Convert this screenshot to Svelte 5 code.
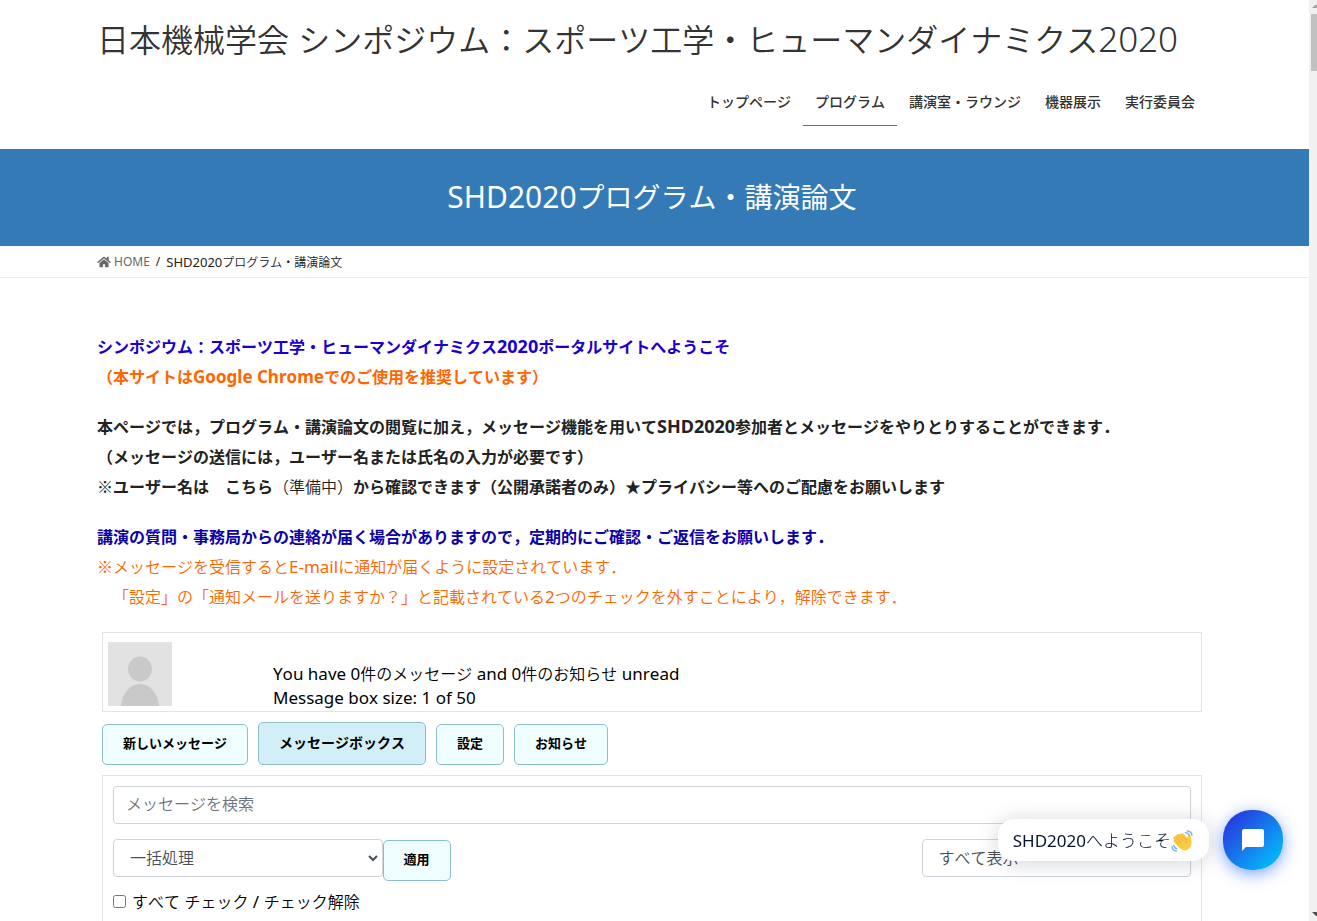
<script>
  const nav = [
    { label: 'トップページ' },
    { label: 'プログラム', current: true },
    { label: '講演室・ラウンジ' },
    { label: '機器展示' },
    { label: '実行委員会' }
  ];
  const tabs = [
    { label: '新しいメッセージ' },
    { label: 'メッセージボックス', current: true },
    { label: '設定' },
    { label: 'お知らせ' }
  ];
</script>

<div class="page">
  <header class="container site-header">
    <a class="site-title" href="#top">日本機械学会<span class="latin-xl">{' '}</span>シンポジウム：スポーツ工学・ヒューマンダイナミクス<span class="latin-xl">2020</span></a>
    <nav>
      {#each nav as item}
        <a href="#nav" class:current={item.current}>{item.label}</a>
      {/each}
    </nav>
  </header>

  <div class="banner">
    <h1><span class="latin-lg">SHD2020</span>プログラム・講演論文</h1>
  </div>

  <div class="crumbs">
    <div class="container crumb-row">
      <a href="#home">
        <svg viewBox="0 0 576 512" width="14" height="12" aria-hidden="true">
          <path fill="currentColor" d="M280 148 96 300v164a16 16 0 0 0 16 16h112a16 16 0 0 0 16-16v-96a16 16 0 0 1 16-16h64a16 16 0 0 1 16 16v96a16 16 0 0 0 16 16h112a16 16 0 0 0 16-16V300L296 148a12 12 0 0 0-16 0zM572 251l-84-69V44a12 12 0 0 0-12-12h-56a12 12 0 0 0-12 12v73l-90-74a48 48 0 0 0-61 0L4 251a12 12 0 0 0-2 17l26 31a12 12 0 0 0 17 2L280 107a12 12 0 0 1 16 0l235 194a12 12 0 0 0 17-2l26-31a12 12 0 0 0-2-17z" />
        </svg>
        <span>HOME</span>
      </a>
      <span>/</span>
      <span class="here"><span class="latin-sm">SHD2020</span>プログラム・講演論文</span>
    </div>
  </div>

  <main class="container">
    <p>
      <strong class="blue">シンポジウム：スポーツ工学・ヒューマンダイナミクス<span class="latin-num">2020</span>ポータルサイトへようこそ</strong><br />
      <strong class="orange">（本サイトは<span class="latin">Google Chrome</span>でのご使用を推奨しています）</strong>
    </p>
    <p>
      <strong>本ページでは，プログラム・講演論文の閲覧に加え，メッセージ機能を用いて<span class="latin-num">SHD2020</span>参加者とメッセージをやりとりすることができます．</strong><br />
      <strong>（メッセージの送信には，ユーザー名または氏名の入力が必要です）</strong><br />
      <strong>※ユーザー名は　こちら</strong>（準備中）<strong>から確認できます（公開承諾者のみ）★プライバシー等へのご配慮をお願いします</strong>
    </p>
    <p>
      <strong class="navy">講演の質問・事務局からの連絡が届く場合がありますので，定期的にご確認・ご返信をお願いします．</strong><br />
      <span class="orange">※メッセージを受信すると<span class="latin">E-mail</span>に通知が届くように設定されています．</span><br />
      <span class="orange">{'\u3000'}「設定」の「通知メールを送りますか？」と記載されている<span class="latin">2</span>つのチェックを外すことにより，解除できます．</span>
    </p>

    <section class="messages">
      <div class="summary">
        <svg class="avatar" viewBox="0 0 64 64" width="64" height="64" aria-hidden="true">
          <rect width="64" height="64" fill="#e2e2e2" />
          <ellipse cx="32" cy="27" rx="12" ry="12.5" fill="#c9c9c9" />
          <path d="M13 64c1-13 9-22 19-22s18 9 19 22z" fill="#c9c9c9" />
        </svg>
        <div class="status">
          <span class="latin">You have 0</span>件のメッセージ<span class="latin">{' and 0'}</span>件のお知らせ<span class="latin">{' unread'}</span><br />
          <span class="latin">Message box size: 1 of 50</span>
        </div>
      </div>

      <div class="tabs">
        {#each tabs as tab}
          <button type="button" class="btn" class:current={tab.current}>{tab.label}</button>
        {/each}
      </div>

      <form class="panel">
        <input class="field" type="search" placeholder="メッセージを検索" aria-label="メッセージを検索" />
        <div class="actions">
          <select class="field arrow" aria-label="一括処理"><option>一括処理</option></select>
          <button type="button" class="btn">適用</button>
          <select class="field filter" aria-label="すべて表示"><option>すべて表示</option></select>
        </div>
        <label class="check">
          <input type="checkbox" />
          <span>すべて<span class="latin">{' '}</span>チェック<span class="latin">{' / '}</span>チェック解除</span>
        </label>
      </form>
    </section>
  </main>

  <aside class="chat">
    <div class="bubble">
      <span><span class="chat-latin">SHD2020</span>へようこそ</span>
      <svg viewBox="0 0 22 22" width="22" height="22" aria-hidden="true">
        <path d="M2.200 7.500c.5-1 1.500-1.200 2.400-.7-.4-1.500 1-2.600 2.400-1.700.2-1.400 1.900-1.900 3-.8.6-1.200 2.100-1.200 3-.2l3.300 4.200c.5-1.300.1-3.200 1.500-3.700 1.500-.4 2.200 1 2.300 3.200.3 2.800.9 5.200-.1 8-1 2.700-3.500 4.700-6.500 4.600-2.600-.1-4.300-1.500-6-3.300L3 12.200c-1-1.200-.6-2.200.4-2.400-1-.6-1.500-1.400-1.200-2.300z" fill="#fbcb43" />
        <path d="m4.600 6.800 5.600 6M7 5.100l5.400 6M10 4.300l4.600 5.200M3.400 9.800 8 14.600M16.300 8.300c-1.700 1.300-1.900 3-1.100 4.800" fill="none" stroke="#e5a12d" stroke-width=".7" stroke-linecap="round" />
        <path d="M14.500 2.600c1.800.1 3.100 1.100 3.700 2.700M16.300 1c2.700.1 4.400 1.800 4.700 4.400M1 16.500c.2 2.600 1.800 4.300 4.500 4.500M2.900 15.300c.2 1.700 1.200 2.900 2.900 3.400" fill="none" stroke="#73b7ed" stroke-width="1.400" stroke-linecap="round" />
      </svg>
    </div>
    <button type="button" class="launcher" aria-label="チャットを開く">
      <svg viewBox="0 0 22 22" width="22" height="22" aria-hidden="true">
        <path d="M2 0h18a2 2 0 0 1 2 2v14a2 2 0 0 1-2 2H4l-4 4V2a2 2 0 0 1 2-2z" fill="#fff" />
      </svg>
    </button>
  </aside>

  <div class="scrollbar" aria-hidden="true">
    <svg viewBox="0 0 8 14" width="8" height="14"><path d="M3 8h5V5H6z" fill="#a3a3a3" /></svg>
    <div class="thumb"></div>
    <svg class="down" viewBox="0 0 8 14" width="8" height="14"><path d="M3 5h5v4H7z" fill="#505050" /></svg>
  </div>
</div>

<style>
  :global(body) {
    margin: 0;
    background: #fff;
  }
  .page {
    --ui: 'Noto Sans CJK JP', sans-serif;
    --latin: 'Noto Sans', 'Noto Sans CJK JP', sans-serif;
    box-sizing: border-box;
    display: flex;
    flex-direction: column;
    height: 100vh;
    overflow: hidden;
    padding-right: 13px;
    font: 350 16px/30px var(--ui);
    text-spacing-trim: space-all;
    color: #222;
  }
  .page * {
    box-sizing: border-box;
    font-kerning: none;
  }
  a {
    color: inherit;
    text-decoration: none;
  }
  .container {
    width: 100%;
    max-width: 1110px;
    margin: 0 auto;
  }
  [class^='latin'] {
    font-family: var(--latin);
    font-weight: 400;
    line-height: 1;
    white-space: pre-wrap;
  }
  strong [class^='latin'] {
    font-weight: 700;
  }
  .latin { font-size: 17px; }
  .latin-num { font-size: 18px; }
  .site-title .latin-xl {
    font-size: 35px;
    font-weight: 300;
  }
  .latin-lg { font-size: 30px; }
  .latin-sm { font-size: 13px; }

  .site-header {
    height: 149px;
    flex: none;
    display: flex;
    flex-direction: column;
    color: #333;
  }
  .site-title {
    font-size: 32px;
    line-height: 40px;
    padding-top: 18px;
    white-space: nowrap;
  }
  nav {
    display: flex;
    justify-content: flex-end;
    margin-top: 20px;
  }
  nav a {
    font-size: 14px;
    font-weight: 500;
    line-height: 46px;
    height: 48px;
    padding: 0 12px;
    border-bottom: 1px solid transparent;
  }
  nav a.current {
    border-bottom-color: #337ab7;
  }

  .banner {
    flex: none;
    display: flex;
    align-items: center;
    justify-content: center;
    height: 97px;
    margin-right: -13px;
    padding: 0 13px 4px 0;
    background: #337ab7;
    color: #fff;
  }
  h1 {
    margin: 0;
    font-size: 28px;
    font-weight: 400;
    line-height: 40px;
  }

  .crumbs {
    flex: none;
    margin-right: -13px;
    padding-right: 13px;
    border-bottom: 1px solid #e9e9e9;
  }
  .crumb-row {
    display: flex;
    gap: 6px;
    font: 12px/31px var(--latin);
  }
  .crumb-row a {
    display: flex;
    align-items: center;
    gap: 3px;
    color: #666;
  }
  .here {
    font-family: var(--ui);
    font-weight: 350;
  }

  main {
    flex: 1;
    display: flex;
    flex-direction: column;
    padding-top: 53px;
  }
  p {
    margin: 0 0 20px;
  }
  strong {
    font-weight: 700;
  }
  .blue { color: #1a00d0; }
  .navy { color: #0b00a8; }
  .orange { color: #ff6600; }

  .messages {
    flex: 1;
    display: flex;
    flex-direction: column;
    margin-top: 1px;
    padding: 0 5px;
    color: #000;
  }
  .summary {
    display: flex;
    height: 80px;
    padding: 9px 5px 0;
    border: 1px solid #e5e5e5;
  }
  .avatar {
    flex: none;
  }
  .status {
    margin-left: 101px;
    padding-top: 19px;
    line-height: 24px;
  }
  .tabs {
    display: flex;
    align-items: flex-end;
    gap: 10px;
    padding: 10px 0;
  }
  .btn {
    height: 41px;
    padding: 0 20px 4px;
    border: 1px solid #8cbfc9;
    border-radius: 5px;
    background: #f0fdff;
    color: #000;
    font: 700 13px/20px var(--ui);
    font-kerning: none;
  }
  .btn.current {
    height: 43px;
    background: #d2eef6;
    font-size: 14px;
  }
  .panel {
    flex: 1;
    padding: 10px;
    border: 1px solid #e5e5e5;
    border-bottom: 0;
  }
  .field {
    display: block;
    appearance: none;
    width: 100%;
    height: 38px;
    padding: 0 12px 4px;
    border: 1px solid #ced4da;
    border-radius: 4px;
    background: #fff;
    color: #495057;
    font: 350 16px/24px var(--ui);
    font-kerning: none;
  }
  .field::placeholder {
    color: #6c757d;
    opacity: 1;
  }
  .actions {
    display: flex;
    align-items: flex-start;
    margin-top: 15px;
  }
  .actions .field {
    width: 25%;
    padding: 0 16px 2px;
  }
  .actions .arrow {
    background: #fff url("data:image/svg+xml,%3Csvg xmlns='http://www.w3.org/2000/svg' viewBox='0 0 10 7'%3E%3Cpath d='M1 1l4 4 4-4' fill='none' stroke='%23495057' stroke-width='2'/%3E%3C/svg%3E") no-repeat right 4px center / 10px 7px;
  }
  .actions .btn {
    margin-top: 1px;
  }
  .actions .filter {
    margin-left: auto;
  }
  .check {
    display: flex;
    align-items: center;
    gap: 6px;
    margin-top: 5px;
    line-height: 30px;
  }
  .check input {
    width: 13px;
    height: 13px;
    margin: 0;
  }

  .chat {
    position: fixed;
    right: 34px;
    bottom: 51px;
    display: flex;
    align-items: center;
    gap: 14px;
  }
  .bubble {
    display: flex;
    align-items: center;
    height: 42px;
    padding: 0 16px 0 15px;
    border-radius: 16px;
    background: #fff;
    box-shadow: 0 2px 22px rgba(0, 18, 46, 0.18);
    color: #06132b;
    font: 300 17px/24px var(--ui);
  }
  .bubble > svg {
    margin-top: 2px;
  }
  .chat-latin {
    font-family: var(--latin);
    font-weight: 400;
  }
  .launcher {
    display: grid;
    place-items: center;
    width: 60px;
    height: 60px;
    padding: 0;
    border: 0;
    border-radius: 28px;
    background: linear-gradient(135deg, #2a27da, #00ccff);
    box-shadow: 0 4px 16px rgba(0, 77, 255, 0.5);
  }

  .scrollbar {
    position: fixed;
    top: 0;
    right: 0;
    bottom: 0;
    width: 8px;
    display: flex;
    flex-direction: column;
    background: #f1f1f1;
  }
  .thumb {
    height: 57px;
    margin-left: 2px;
    background: #c1c1c1;
  }
  .down {
    margin-top: auto;
  }
</style>
